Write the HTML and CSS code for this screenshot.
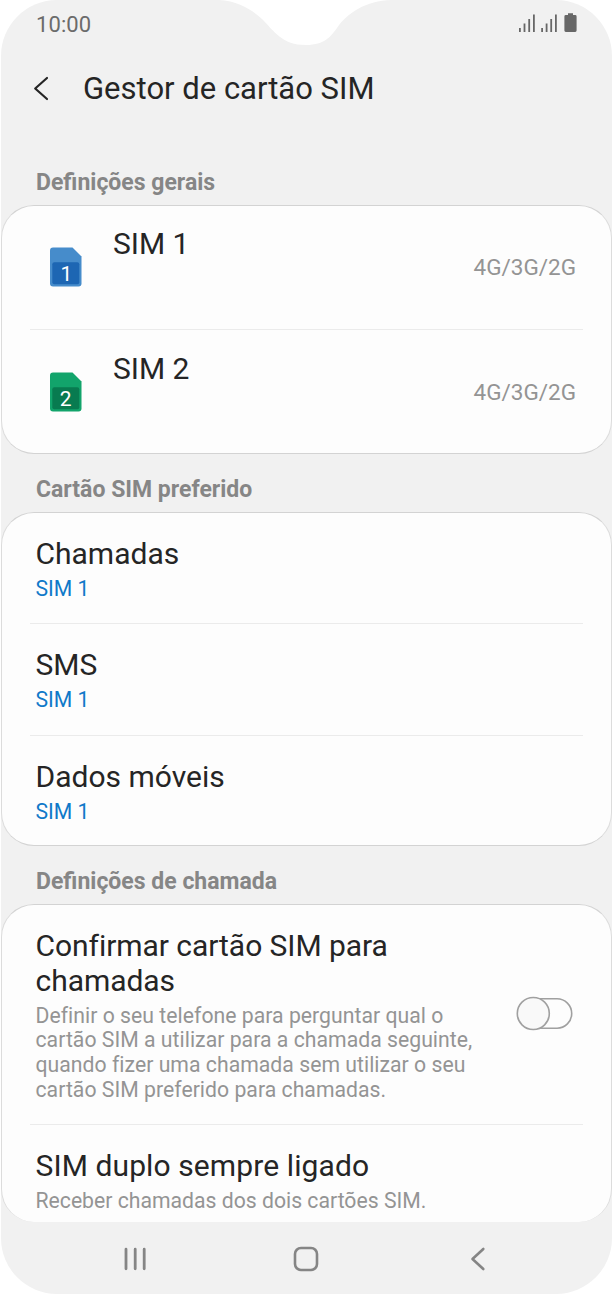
FILE: index.html
```html
<!DOCTYPE html>
<html lang="pt">
<head>
<meta charset="utf-8">
<title>Gestor de cartão SIM</title>
<link rel="stylesheet" href="styles.css">
</head>
<body>
<div class="screen">
  <svg class="notch" width="172" height="46" viewBox="219 0 172 46"><path d="M219 0C239 1 252 10 262 19C274 31 282 45 306 45C325 45 331 36 337 28C346 14 367 0 391 0Z" fill="#fff"/></svg>
  <header class="status">
    <span class="clock">10:00</span>
    <svg class="status-icons" width="60" height="22" viewBox="518 12 60 22" fill="#676767">
      <path d="M519 28h1.800v4H519zM523.600 23.500h1.800V32h-1.800zM528.300 19h1.800v13h-1.800zM533 14.500h1.800V32H533z"/>
      <path d="M541.200 28h1.800v4h-1.800zM545.700 23.500h1.800V32h-1.800zM550.300 19h1.800v13h-1.800zM555 14.500h1.800V32H555z"/>
      <path d="M568 13.300h5v1.700h2.200q1.400 0 1.400 1.400v14.200q0 1.400-1.400 1.400h-9.400q-1.400 0-1.400-1.400V16.400q0-1.400 1.400-1.400H568z"/>
    </svg>
  </header>
  <div class="toolbar">
    <svg class="back" width="18" height="26" viewBox="0 0 18 26"><path d="M15 2L3.200 12.500L15 23" fill="none" stroke="#252525" stroke-width="2.200" stroke-linecap="round" stroke-linejoin="round"/></svg>
    <h1 class="title">Gestor de cartão SIM</h1>
  </div>
  <main class="content">
    <h2 class="section first">Definições gerais</h2>
    <section class="card">
      <div class="row sim">
        <svg class="sim-icon" width="32" height="40" viewBox="0 0 32 40"><path d="M3 .5H22.500L31.500 9.500V36.500Q31.500 39.500 28.500 39.500H3Q0 39.500 0 36.500V3.500Q0 .5 3 .5Z" fill="#468ccb"/><rect x="2.300" y="15.300" width="27" height="22" rx="2" fill="#1d66b3"/><text class="sim-digit" x="16.500" y="33.500">1</text></svg>
        <span class="name">SIM 1</span>
        <span class="network">4G/3G/2G</span>
      </div>
      <div class="row sim">
        <svg class="sim-icon" width="32" height="40" viewBox="0 0 32 40"><path d="M3 .5H22.500L31.500 9.500V36.500Q31.500 39.500 28.500 39.500H3Q0 39.500 0 36.500V3.500Q0 .5 3 .5Z" fill="#12a46b"/><rect x="2.300" y="15.300" width="27" height="22" rx="2" fill="#087b50"/><text class="sim-digit" x="15.700" y="33.500">2</text></svg>
        <span class="name">SIM 2</span>
        <span class="network">4G/3G/2G</span>
      </div>
    </section>
    <h2 class="section">Cartão SIM preferido</h2>
    <section class="card">
      <div class="row choice"><div class="name">Chamadas</div><div class="value">SIM 1</div></div>
      <div class="row choice"><div class="name">SMS</div><div class="value">SIM 1</div></div>
      <div class="row choice"><div class="name">Dados móveis</div><div class="value">SIM 1</div></div>
    </section>
    <h2 class="section">Definições de chamada</h2>
    <section class="card last">
      <div class="row confirm">
        <div class="text">
          <div class="name">Confirmar cartão SIM para<br>chamadas</div>
          <p class="desc">Definir o seu telefone para perguntar qual o<br>cartão SIM a utilizar para a chamada seguinte,<br>quando fizer uma chamada sem utilizar o seu<br>cartão SIM preferido para chamadas.</p>
        </div>
        <svg class="switch" width="57" height="35" viewBox="0 0 57 35" stroke="#a0a0a0" stroke-width="1.600"><rect x="3" y="2.800" width="52.700" height="29.400" rx="14.700" fill="#fdfdfd"/><circle cx="17.300" cy="17.500" r="16" fill="#f9f9f9"/></svg>
      </div>
      <div class="row dual">
        <div class="name">SIM duplo sempre ligado</div>
        <p class="desc">Receber chamadas dos dois cartões SIM.</p>
      </div>
    </section>
  </main>
  <nav class="navbar">
    <svg width="24" height="26" viewBox="0 0 24 26"><path d="M2 3.200V22.800M11.200 3.200V22.800M20.200 3.200V22.800" stroke="#858585" stroke-width="2.800" stroke-linecap="round"/></svg>
    <svg class="home" width="26" height="26" viewBox="0 0 26 26"><rect x="2" y="2" width="22" height="22" rx="6" fill="none" stroke="#858585" stroke-width="2.600"/></svg>
    <svg width="16" height="26" viewBox="0 0 16 26"><path d="M13.300 3L2.500 13L13.300 23" fill="none" stroke="#858585" stroke-width="2.600" stroke-linecap="round" stroke-linejoin="round"/></svg>
  </nav>
</div>
</body>
</html>
```
FILE: styles.css
```css
* { box-sizing: border-box; }
body {
  margin: 0;
  background: #fff;
  font-family: Roboto, "Liberation Sans", sans-serif;
  color: #252525;
}
h1, h2, p { margin: 0; font-weight: 400; }
svg { display: block; flex: none; }
.screen {
  position: relative;
  width: 610.5px;
  height: 1294px;
  margin-left: 1px;
  background: #f1f1f1;
  border-radius: 56px;
  overflow: hidden;
  display: flex;
  flex-direction: column;
}
.notch { position: absolute; left: 218px; top: 0; }
.status {
  height: 48px;
  padding: 0 34px 0 35px;
  display: flex;
  align-items: center;
  justify-content: space-between;
}
.clock { font-size: 22px; letter-spacing: .1px; color: #6b6b6b; padding-top: 1px; }
.status-icons { margin-top: -2px; }
.toolbar {
  height: 80px;
  padding: 1px 0 0 31px;
  display: flex;
  align-items: center;
  gap: 33px;
}
.title { font-size: 31px; }
.section {
  height: 58px;
  padding: 13px 0 0 35px;
  font-size: 23px;
  line-height: 46px;
  font-weight: 700;
  color: #868686;
}
.first { height: 77px; padding-top: 32px; }
.card {
  background: #fdfdfd;
  border: 1px solid #d3d3d3;
  border-left-color: #dcdcdc;
  border-right-color: #dcdcdc;
  border-radius: 33px;
  overflow: hidden;
  padding: 0 28px;
}
.row { padding-left: 5.500px; }
.row + .row { border-top: 1px solid #ebebeb; }
.name { font-size: 30px; line-height: 35px; white-space: nowrap; }
.sim {
  height: 123px;
  display: grid;
  grid-template-columns: 77.500px 1fr auto;
  align-items: center;
  padding-right: 6.500px;
  padding-bottom: 2px;
}
.sim + .sim { height: 124px; padding-top: 1px; padding-bottom: 0; }
.sim-icon { margin-left: 14px; }
.sim .name { align-self: start; padding-top: 20px; }
.sim-digit { font-size: 21px; fill: #fff; text-anchor: middle; }
.network { font-size: 22.500px; color: #949494; }
.choice { height: 110px; padding-top: 23px; }
.choice:nth-child(2) { height: 112px; }
.value { font-size: 21.200px; line-height: 34px; color: #1079c9; padding-top: 1px; }
.last { height: 318px; border-bottom: 0; }
.confirm {
  height: 219px;
  padding-top: 23px;
  display: flex;
  justify-content: space-between;
}
.confirm .name { letter-spacing: -.05px; }
.desc { font-size: 21.200px; line-height: 24.700px; color: #949494; white-space: nowrap; }
.confirm .desc { margin-top: 5.500px; letter-spacing: .03px; }
.switch { margin: 68px 10px 0 0; }
.dual { padding-top: 23px; }
.dual .name { letter-spacing: .1px; }
.dual .desc { margin-top: 6px; }
.navbar {
  height: 72px;
  padding: 2px 126px 0 123px;
  display: flex;
  align-items: center;
  justify-content: space-between;
}
.home { margin-right: 5px; }
```
